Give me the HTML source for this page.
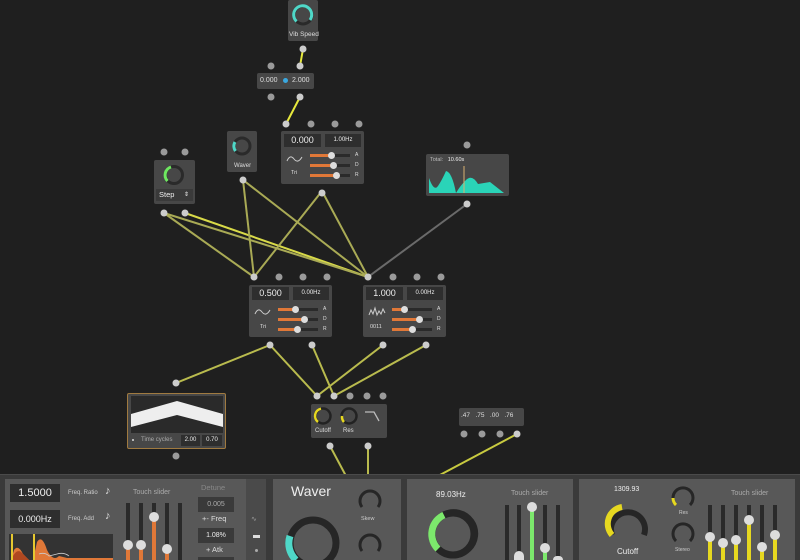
<!DOCTYPE html>
<html><head><meta charset="utf-8"><style>
*{margin:0;padding:0;box-sizing:border-box}
html,body{width:800px;height:560px;overflow:hidden}
body{background:#1f1f1f;position:relative;font-family:"Liberation Sans",sans-serif;color:#ddd}
.n{position:absolute;background:#474747;border-radius:2px}
.t{position:absolute;font-size:7px;color:#ddd;white-space:nowrap}
.box{position:absolute;background:#2e2e2e;color:#eee;text-align:center}
.p{position:absolute;background:#585858}
</style></head><body>
<svg width="800" height="560" style="position:absolute;left:0;top:0">
<g stroke-width="2" fill="none">
<line x1="303" y1="49" x2="300" y2="66" stroke="#e6e83c"/>
<line x1="300" y1="97" x2="286" y2="124" stroke="#e6e83c"/>
<line x1="185" y1="213" x2="368" y2="277" stroke="#d8da48"/>
<line x1="164" y1="213" x2="254" y2="277" stroke="#a9aa55"/>
<line x1="164" y1="213" x2="368" y2="277" stroke="#a9aa55"/>
<line x1="243" y1="180" x2="254" y2="277" stroke="#a9aa55"/>
<line x1="243" y1="180" x2="368" y2="277" stroke="#a9aa55"/>
<line x1="322" y1="191" x2="254" y2="277" stroke="#a9aa55"/>
<line x1="322" y1="191" x2="368" y2="277" stroke="#a9aa55"/>
<line x1="467" y1="204" x2="368" y2="277" stroke="#6a6a6a"/>
<line x1="270" y1="345" x2="176" y2="383" stroke="#b9bb4e"/>
<line x1="270" y1="345" x2="317" y2="396" stroke="#b9bb4e"/>
<line x1="312" y1="345" x2="334" y2="396" stroke="#b9bb4e"/>
<line x1="383" y1="345" x2="317" y2="396" stroke="#b9bb4e"/>
<line x1="426" y1="345" x2="334" y2="396" stroke="#b9bb4e"/>
<line x1="330" y1="446" x2="346" y2="476" stroke="#b9bb4e"/>
<line x1="368" y1="446" x2="368" y2="476" stroke="#b9bb4e"/>
<line x1="517" y1="434" x2="438" y2="476" stroke="#c8ca40"/>
</g>
<g fill="#9a9a9a">
<circle cx="303" cy="49" r="3.5" fill="#ccc"/>
<circle cx="271" cy="66" r="3.5"/><circle cx="300" cy="66" r="3.5" fill="#ccc"/>
<circle cx="271" cy="97" r="3.5"/><circle cx="300" cy="97" r="3.5" fill="#ccc"/>
<circle cx="286" cy="124" r="3.5" fill="#ccc"/><circle cx="311" cy="124" r="3.5"/><circle cx="335" cy="124" r="3.5"/><circle cx="359" cy="124" r="3.5"/>
<circle cx="322" cy="193" r="3.5" fill="#ccc"/>
<circle cx="243" cy="180" r="3.5" fill="#ccc"/>
<circle cx="164" cy="152" r="3.5"/><circle cx="185" cy="152" r="3.5"/>
<circle cx="164" cy="213" r="3.5" fill="#ccc"/><circle cx="185" cy="213" r="3.5" fill="#ccc"/>
<circle cx="467" cy="145" r="3.5"/><circle cx="467" cy="204" r="3.5" fill="#ccc"/>
<circle cx="254" cy="277" r="3.5" fill="#ccc"/><circle cx="279" cy="277" r="3.5"/><circle cx="303" cy="277" r="3.5"/><circle cx="327" cy="277" r="3.5"/>
<circle cx="368" cy="277" r="3.5" fill="#ccc"/><circle cx="393" cy="277" r="3.5"/><circle cx="417" cy="277" r="3.5"/><circle cx="441" cy="277" r="3.5"/>
<circle cx="270" cy="345" r="3.5" fill="#ccc"/><circle cx="312" cy="345" r="3.5" fill="#ccc"/>
<circle cx="383" cy="345" r="3.5" fill="#ccc"/><circle cx="426" cy="345" r="3.5" fill="#ccc"/>
<circle cx="176" cy="383" r="3.5" fill="#ccc"/><circle cx="176" cy="456" r="3.5"/>
<circle cx="317" cy="396" r="3.5" fill="#ccc"/><circle cx="334" cy="396" r="3.5" fill="#ccc"/><circle cx="350" cy="396" r="3.5"/><circle cx="367" cy="396" r="3.5"/><circle cx="383" cy="396" r="3.5"/>
<circle cx="330" cy="446" r="3.5" fill="#ccc"/><circle cx="368" cy="446" r="3.5" fill="#ccc"/>
<circle cx="464" cy="434" r="3.5"/><circle cx="482" cy="434" r="3.5"/><circle cx="500" cy="434" r="3.5"/><circle cx="517" cy="434" r="3.5" fill="#ccc"/>
</g>
</svg>

<!-- Vib speed -->
<div class="n" style="left:288px;top:0;width:30px;height:41px"></div>
<svg style="position:absolute;left:290px;top:2px" width="26" height="26"><circle cx="13" cy="13" r="9" fill="none" stroke="#2a2a2a" stroke-width="3"/><path d="M6.6 19.4A9 9 0 1 1 20 18" fill="none" stroke="#4fd8c8" stroke-width="3"/></svg>
<div class="t" style="left:289px;top:31px;font-size:6.5px">Vib Speed</div>

<!-- range -->
<div class="n" style="left:257px;top:73px;width:57px;height:16px"></div>
<div class="t" style="left:260px;top:77px">0.000</div>
<div style="position:absolute;left:283px;top:78px;width:5px;height:5px;border-radius:50%;background:#3aa8e0"></div>
<div class="t" style="left:292px;top:77px">2.000</div>

<!-- Env1 -->
<div class="n" style="left:281px;top:131px;width:83px;height:53px"></div>
<div class="box" style="left:284px;top:134px;width:37px;height:13px;font-size:9px;line-height:13px">0.000</div>
<div class="box" style="left:325px;top:134px;width:36px;height:13px;font-size:6px;line-height:13px">1.00Hz</div>
<svg style="position:absolute;left:286px;top:153px" width="18" height="12"><path d="M1 8Q4 1 8 6T16 4" fill="none" stroke="#ccc" stroke-width="1"/></svg>
<div class="t" style="left:291px;top:170px;font-size:5.5px">Tri</div>
<div style="position:absolute;left:310px;top:154px;width:40px;height:3px;background:#2a2a2a"><div style="width:21px;height:3px;background:#e07838"></div></div>
<div style="position:absolute;left:310px;top:164px;width:40px;height:3px;background:#2a2a2a"><div style="width:23px;height:3px;background:#e07838"></div></div>
<div style="position:absolute;left:310px;top:174px;width:40px;height:3px;background:#2a2a2a"><div style="width:26px;height:3px;background:#e07838"></div></div>
<div style="position:absolute;left:328px;top:152px;width:7px;height:7px;border-radius:50%;background:#ddd"></div>
<div style="position:absolute;left:330px;top:162px;width:7px;height:7px;border-radius:50%;background:#ddd"></div>
<div style="position:absolute;left:333px;top:172px;width:7px;height:7px;border-radius:50%;background:#ddd"></div>
<div class="t" style="left:355px;top:152px;font-size:5px">A</div><div class="t" style="left:355px;top:162px;font-size:5px">D</div><div class="t" style="left:355px;top:172px;font-size:5px">R</div>

<!-- Waver knob node -->
<div class="n" style="left:227px;top:131px;width:30px;height:41px"></div>
<svg style="position:absolute;left:229px;top:133px" width="26" height="26"><circle cx="13" cy="13" r="8" fill="none" stroke="#2a2a2a" stroke-width="3"/><path d="M6.6 18A8 8 0 0 1 6 9" fill="none" stroke="#4fd8c8" stroke-width="3"/></svg>
<div class="t" style="left:234px;top:163px;font-size:6px">Waver</div>

<!-- Step -->
<div class="n" style="left:154px;top:160px;width:41px;height:44px"></div>
<svg style="position:absolute;left:160px;top:162px" width="28" height="26"><circle cx="14" cy="13" r="8.5" fill="none" stroke="#2a2a2a" stroke-width="3"/><path d="M7.5 19A8.5 8.5 0 0 1 11 5" fill="none" stroke="#6ee860" stroke-width="3"/></svg>
<div class="box" style="left:156px;top:189px;width:37px;height:12px;background:#3a3a3a;font-size:7.5px;line-height:12px;text-align:left;padding-left:3px">Step <span style="float:right;padding-right:4px;font-size:6px">⇕</span></div>

<!-- Total -->
<div class="n" style="left:426px;top:154px;width:83px;height:42px"></div>
<div class="t" style="left:430px;top:157px;font-size:5.5px;color:#bbb">Total: &nbsp;&nbsp;<span style="color:#eee">10.60s</span></div>
<svg style="position:absolute;left:428px;top:164px" width="80" height="30"><path d="M1 29V14Q6 28 10 22T18 7Q24 8 28 29V29Q32 22 38 16T50 20L62 18L76 29Z" fill="#2ad4b8"/><line x1="36" y1="2" x2="36" y2="29" stroke="#d8b070" stroke-width="1"/></svg>

<!-- Env2 -->
<div class="n" style="left:249px;top:285px;width:83px;height:52px"></div>
<div class="box" style="left:252px;top:287px;width:37px;height:13px;font-size:9px;line-height:13px">0.500</div>
<div class="box" style="left:293px;top:287px;width:36px;height:13px;font-size:6px;line-height:13px">0.00Hz</div>
<svg style="position:absolute;left:254px;top:306px" width="18" height="12"><path d="M1 8Q4 1 8 6T16 4" fill="none" stroke="#ccc" stroke-width="1"/></svg>
<div class="t" style="left:260px;top:324px;font-size:5.5px">Tri</div>
<div style="position:absolute;left:278px;top:308px;width:40px;height:3px;background:#2a2a2a"><div style="width:16px;height:3px;background:#e07838"></div></div>
<div style="position:absolute;left:278px;top:318px;width:40px;height:3px;background:#2a2a2a"><div style="width:25px;height:3px;background:#e07838"></div></div>
<div style="position:absolute;left:278px;top:328px;width:40px;height:3px;background:#2a2a2a"><div style="width:19px;height:3px;background:#e07838"></div></div>
<div style="position:absolute;left:292px;top:306px;width:7px;height:7px;border-radius:50%;background:#ddd"></div>
<div style="position:absolute;left:301px;top:316px;width:7px;height:7px;border-radius:50%;background:#ddd"></div>
<div style="position:absolute;left:294px;top:326px;width:7px;height:7px;border-radius:50%;background:#ddd"></div>
<div class="t" style="left:323px;top:306px;font-size:5px">A</div><div class="t" style="left:323px;top:316px;font-size:5px">D</div><div class="t" style="left:323px;top:326px;font-size:5px">R</div>

<!-- Env3 -->
<div class="n" style="left:363px;top:285px;width:83px;height:52px"></div>
<div class="box" style="left:366px;top:287px;width:37px;height:13px;font-size:9px;line-height:13px">1.000</div>
<div class="box" style="left:407px;top:287px;width:36px;height:13px;font-size:6px;line-height:13px">0.00Hz</div>
<svg style="position:absolute;left:368px;top:306px" width="18" height="12"><path d="M1 9L3 4L5 8L7 2L9 9L11 5L13 8L15 3L17 7" fill="none" stroke="#ccc" stroke-width="1"/></svg>
<div class="t" style="left:370px;top:324px;font-size:5.5px">0011</div>
<div style="position:absolute;left:392px;top:308px;width:40px;height:3px;background:#2a2a2a"><div style="width:12px;height:3px;background:#e07838"></div></div>
<div style="position:absolute;left:392px;top:318px;width:40px;height:3px;background:#2a2a2a"><div style="width:27px;height:3px;background:#e07838"></div></div>
<div style="position:absolute;left:392px;top:328px;width:40px;height:3px;background:#2a2a2a"><div style="width:20px;height:3px;background:#e07838"></div></div>
<div style="position:absolute;left:401px;top:306px;width:7px;height:7px;border-radius:50%;background:#ddd"></div>
<div style="position:absolute;left:416px;top:316px;width:7px;height:7px;border-radius:50%;background:#ddd"></div>
<div style="position:absolute;left:409px;top:326px;width:7px;height:7px;border-radius:50%;background:#ddd"></div>
<div class="t" style="left:437px;top:306px;font-size:5px">A</div><div class="t" style="left:437px;top:316px;font-size:5px">D</div><div class="t" style="left:437px;top:326px;font-size:5px">R</div>

<!-- triangle node -->
<div class="n" style="left:127px;top:393px;width:99px;height:56px;border:1.5px solid #a07a40"></div>
<svg style="position:absolute;left:131px;top:396px" width="92" height="37"><rect width="92" height="37" fill="#2a2a2a"/><path d="M0 18L46 5L92 18V31L46 19L0 31Z" fill="#eee"/></svg>
<div style="position:absolute;left:132px;top:439px;width:2px;height:2px;background:#ddd;border-radius:50%"></div>
<div class="t" style="left:141px;top:437px;font-size:6px;color:#aaa">Time cycles</div>
<div class="box" style="left:181px;top:435px;width:19px;height:11px;font-size:6px;line-height:11px">2.00</div>
<div class="box" style="left:202px;top:435px;width:20px;height:11px;font-size:6px;line-height:11px">0.70</div>

<!-- filter node -->
<div class="n" style="left:311px;top:404px;width:76px;height:34px"></div>
<svg style="position:absolute;left:312px;top:405px" width="72" height="22"><circle cx="11" cy="11" r="7.5" fill="none" stroke="#222" stroke-width="2.5"/><path d="M6 17A7.5 7.5 0 0 1 9 3.7" fill="none" stroke="#e6d820" stroke-width="2.5"/><circle cx="37" cy="11" r="7.5" fill="none" stroke="#222" stroke-width="2.5"/><path d="M32 17A7.5 7.5 0 0 1 30 11" fill="none" stroke="#e6d820" stroke-width="2.5"/><path d="M53 7H62L67 16" fill="none" stroke="#bbb" stroke-width="1.3"/></svg>
<div class="t" style="left:315px;top:428px;font-size:6px">Cutoff</div>
<div class="t" style="left:343px;top:428px;font-size:6px">Res</div>

<!-- numbers node -->
<div class="n" style="left:459px;top:408px;width:65px;height:18px"></div>
<div class="t" style="left:461px;top:412px;font-size:6.5px">.47 &nbsp;&nbsp;.75 &nbsp;&nbsp;.00 &nbsp;&nbsp;.76</div>

<!-- bottom bar -->
<div style="position:absolute;left:0;top:474px;width:800px;height:86px;background:#3a3a3a;border-top:1px solid #4a4a4a"></div>

<!-- panel1 -->
<div class="p" style="left:5px;top:479px;width:261px;height:81px"></div>
<div style="position:absolute;left:246px;top:479px;width:20px;height:81px;background:#4a4a4a"></div>
<div class="box" style="left:10px;top:484px;width:50px;height:18px;font-size:11px;line-height:18px">1.5000</div>
<div class="t" style="left:68px;top:490px;font-size:6px;color:#ccc">Freq. Ratio</div>
<div class="t" style="left:105px;top:485px;font-size:11px">♪</div>
<div class="box" style="left:10px;top:510px;width:50px;height:18px;font-size:9px;line-height:18px">0.000Hz</div>
<div class="t" style="left:68px;top:516px;font-size:6px;color:#ccc">Freq. Add</div>
<div class="t" style="left:105px;top:510px;font-size:11px">♪</div>
<svg style="position:absolute;left:9px;top:534px" width="104" height="26"><rect width="104" height="26" fill="#333"/><path d="M2 26L5 16Q9 10 14 20L20 26M24 26L28 8Q33 0 38 16Q44 28 50 22L58 24H104V26Z" fill="#e07838"/><path d="M2 26Q8 12 14 20L20 26Z" fill="#b04820"/><path d="M30 20Q36 18 40 22L48 20Q55 18 60 22" fill="none" stroke="#ccc" stroke-width="0.8"/><line x1="3" y1="0" x2="3" y2="26" stroke="#e6c830" stroke-width="2"/><line x1="25" y1="0" x2="25" y2="26" stroke="#e6c830" stroke-width="2"/></svg>
<div class="t" style="left:133px;top:489px;font-size:7px;color:#aaa">Touch slider</div>
<div style="position:absolute;left:126px;top:503px;width:4px;height:57px;background:#2a2a2a"></div>
<div style="position:absolute;left:139px;top:503px;width:4px;height:57px;background:#2a2a2a"></div>
<div style="position:absolute;left:152px;top:503px;width:4px;height:57px;background:#2a2a2a"></div>
<div style="position:absolute;left:165px;top:503px;width:4px;height:57px;background:#2a2a2a"></div>
<div style="position:absolute;left:178px;top:503px;width:4px;height:57px;background:#2a2a2a"></div>
<div style="position:absolute;left:126px;top:545px;width:4px;height:15px;background:#e07838"></div>
<div style="position:absolute;left:139px;top:545px;width:4px;height:15px;background:#e07838"></div>
<div style="position:absolute;left:152px;top:517px;width:4px;height:43px;background:#e07838"></div>
<div style="position:absolute;left:165px;top:549px;width:4px;height:11px;background:#e07838"></div>
<div style="position:absolute;left:123px;top:540px;width:10px;height:10px;border-radius:50%;background:#ddd"></div>
<div style="position:absolute;left:136px;top:540px;width:10px;height:10px;border-radius:50%;background:#ddd"></div>
<div style="position:absolute;left:149px;top:512px;width:10px;height:10px;border-radius:50%;background:#ddd"></div>
<div style="position:absolute;left:162px;top:544px;width:10px;height:10px;border-radius:50%;background:#ddd"></div>
<div class="t" style="left:201px;top:483px;font-size:7.5px;color:#888">Detune</div>
<div class="box" style="left:198px;top:497px;width:36px;height:15px;background:#3a3a3a;font-size:7px;line-height:15px;color:#aaa">0.005</div>
<div class="t" style="left:202px;top:514px;font-size:7.5px">+- Freq</div>
<div class="box" style="left:198px;top:528px;width:36px;height:15px;background:#3a3a3a;font-size:7px;line-height:15px">1.08%</div>
<div class="t" style="left:206px;top:545px;font-size:7.5px">+ Atk</div>
<div class="box" style="left:198px;top:557px;width:36px;height:3px;background:#3a3a3a"></div>
<div class="t" style="left:251px;top:515px;font-size:7px;color:#999">∿</div>
<div style="position:absolute;left:253px;top:535px;width:7px;height:3px;background:#ddd"></div>
<div style="position:absolute;left:255px;top:549px;width:3px;height:3px;border-radius:50%;background:#aaa"></div>

<!-- panel2 -->
<div class="p" style="left:273px;top:479px;width:128px;height:81px"></div>
<div class="t" style="left:291px;top:483px;font-size:14px;color:#eee">Waver</div>
<svg style="position:absolute;left:278px;top:506px" width="70" height="54"><circle cx="35" cy="37" r="23" fill="none" stroke="#262626" stroke-width="7"/><path d="M12 30A23 23 0 0 0 18 54" fill="none" stroke="#4fd8c8" stroke-width="7"/></svg>
<svg style="position:absolute;left:355px;top:484px" width="30" height="30"><path d="M7 23A10 10 0 1 1 23 23" fill="none" stroke="#262626" stroke-width="3"/></svg>
<div class="t" style="left:361px;top:516px;font-size:5.5px;color:#ccc">Skew</div>
<svg style="position:absolute;left:355px;top:528px" width="30" height="32"><path d="M7 23A10 10 0 1 1 23 23" fill="none" stroke="#262626" stroke-width="3"/></svg>

<!-- panel3 -->
<div class="p" style="left:407px;top:479px;width:166px;height:81px"></div>
<div class="t" style="left:436px;top:490px;font-size:8px;color:#eee">89.03Hz</div>
<svg style="position:absolute;left:420px;top:504px" width="70" height="56"><circle cx="33" cy="30" r="21" fill="none" stroke="#262626" stroke-width="7"/><path d="M18 45A21 21 0 0 1 24 11" fill="none" stroke="#7ce86c" stroke-width="7"/><path d="M48 45A21 21 0 0 0 24 11" fill="none" stroke="#262626" stroke-width="7"/></svg>
<div class="t" style="left:511px;top:490px;font-size:7px;color:#aaa">Touch slider</div>
<div style="position:absolute;left:505px;top:505px;width:4px;height:55px;background:#2a2a2a"></div>
<div style="position:absolute;left:517px;top:505px;width:4px;height:55px;background:#2a2a2a"></div>
<div style="position:absolute;left:530px;top:505px;width:4px;height:55px;background:#2a2a2a"></div>
<div style="position:absolute;left:543px;top:505px;width:4px;height:55px;background:#2a2a2a"></div>
<div style="position:absolute;left:556px;top:505px;width:4px;height:55px;background:#2a2a2a"></div>
<div style="position:absolute;left:530px;top:506px;width:4px;height:54px;background:#7ce86c"></div>
<div style="position:absolute;left:543px;top:548px;width:4px;height:12px;background:#7ce86c"></div>
<div style="position:absolute;left:527px;top:502px;width:10px;height:10px;border-radius:50%;background:#ddd"></div>
<div style="position:absolute;left:540px;top:543px;width:10px;height:10px;border-radius:50%;background:#ddd"></div>
<div style="position:absolute;left:514px;top:551px;width:10px;height:9px;border-radius:5px 5px 0 0;background:#ddd"></div>
<div style="position:absolute;left:553px;top:556px;width:10px;height:4px;border-radius:5px 5px 0 0;background:#ddd"></div>

<!-- panel4 -->
<div class="p" style="left:579px;top:479px;width:216px;height:81px"></div>
<div class="t" style="left:614px;top:486px;font-size:7px;color:#eee">1309.93</div>
<svg style="position:absolute;left:600px;top:496px" width="56" height="48"><path d="M12 39A17 17 0 1 1 44 39" fill="none" stroke="#262626" stroke-width="6"/><path d="M12 39A17 17 0 0 1 22 11" fill="none" stroke="#e6d820" stroke-width="6"/></svg>
<div class="t" style="left:617px;top:547px;font-size:8px;color:#eee">Cutoff</div>
<svg style="position:absolute;left:668px;top:483px" width="30" height="28"><path d="M8 22A10 10 0 1 1 22 22" fill="none" stroke="#262626" stroke-width="3"/><path d="M8 22A10 10 0 0 1 5 15" fill="none" stroke="#e6d820" stroke-width="3"/></svg>
<div class="t" style="left:679px;top:510px;font-size:5px;color:#ccc">Res</div>
<svg style="position:absolute;left:668px;top:519px" width="30" height="28"><path d="M8 22A10 10 0 1 1 22 22" fill="none" stroke="#262626" stroke-width="3"/></svg>
<div class="t" style="left:675px;top:547px;font-size:5px;color:#ccc">Stereo</div>
<div class="t" style="left:731px;top:490px;font-size:7px;color:#aaa">Touch slider</div>
<div style="position:absolute;left:708px;top:505px;width:4px;height:55px;background:#2a2a2a"></div>
<div style="position:absolute;left:721px;top:505px;width:4px;height:55px;background:#2a2a2a"></div>
<div style="position:absolute;left:734px;top:505px;width:4px;height:55px;background:#2a2a2a"></div>
<div style="position:absolute;left:747px;top:505px;width:4px;height:55px;background:#2a2a2a"></div>
<div style="position:absolute;left:760px;top:505px;width:4px;height:55px;background:#2a2a2a"></div>
<div style="position:absolute;left:773px;top:505px;width:4px;height:55px;background:#2a2a2a"></div>
<div style="position:absolute;left:708px;top:540px;width:4px;height:20px;background:#e6d820"></div>
<div style="position:absolute;left:721px;top:543px;width:4px;height:17px;background:#e6d820"></div>
<div style="position:absolute;left:734px;top:540px;width:4px;height:20px;background:#e6d820"></div>
<div style="position:absolute;left:747px;top:520px;width:4px;height:40px;background:#e6d820"></div>
<div style="position:absolute;left:760px;top:547px;width:4px;height:13px;background:#e6d820"></div>
<div style="position:absolute;left:773px;top:535px;width:4px;height:25px;background:#e6d820"></div>
<div style="position:absolute;left:705px;top:532px;width:10px;height:10px;border-radius:50%;background:#ddd"></div>
<div style="position:absolute;left:718px;top:538px;width:10px;height:10px;border-radius:50%;background:#ddd"></div>
<div style="position:absolute;left:731px;top:535px;width:10px;height:10px;border-radius:50%;background:#ddd"></div>
<div style="position:absolute;left:744px;top:515px;width:10px;height:10px;border-radius:50%;background:#ddd"></div>
<div style="position:absolute;left:757px;top:542px;width:10px;height:10px;border-radius:50%;background:#ddd"></div>
<div style="position:absolute;left:770px;top:530px;width:10px;height:10px;border-radius:50%;background:#ddd"></div>
</body></html>
